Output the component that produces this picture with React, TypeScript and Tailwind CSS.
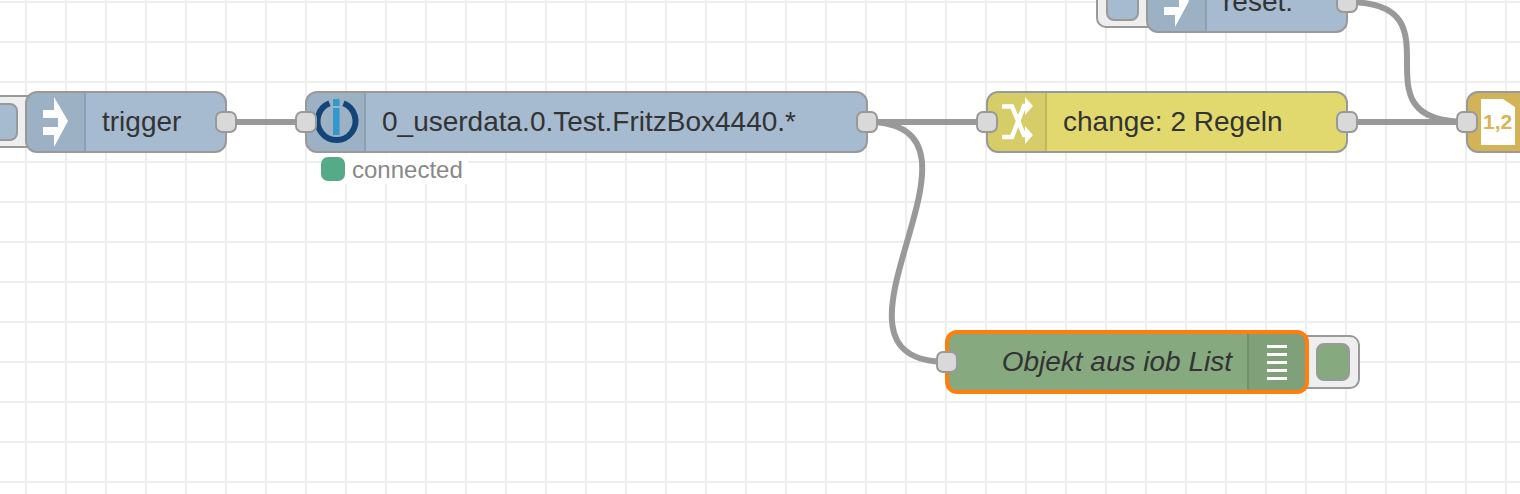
import type { ReactNode } from "react";

const FONT = "font-['Liberation_Sans',Arial,sans-serif]";

function Port({ side }: { side: "left" | "right" }) {
    return (
        <div
            className={`absolute top-[20px] h-[22px] w-[22px] rounded-[7px] border-2 border-[#999] bg-[#d9d9d9] ${
                side === "left" ? "left-[-10px]" : "right-[-10px]"
            }`}
        />
    );
}

function InjectIcon() {
    return (
        <svg width="57" height="58" viewBox="0 0 57 58" className="shrink-0">
            <path d="M27 4 L41 28 L27 54 L27 42 L16 42 L16 34 L31 34 L31 25 L16 25 L16 17 L27 17 Z" fill="#fff" />
        </svg>
    );
}

function IobIcon() {
    return (
        <svg width="57" height="58" viewBox="0 0 57 58" className="shrink-0">
            <path d="M22.5 10.3 A19 19 0 1 0 36.5 10.3" fill="none" stroke="#144578" strokeWidth="6" />
            <rect x="26" y="6" width="6.6" height="7" fill="#3399cc" />
            <rect x="26" y="15" width="6.6" height="27" fill="#3399cc" />
        </svg>
    );
}

function ChangeIcon() {
    return (
        <svg width="57" height="58" viewBox="0 0 57 58" className="shrink-0">
            <g fill="none" stroke="#fff" strokeWidth="4.5">
                <path d="M14 13.5 H24 L36 42 H39" />
                <path d="M14 44 H24 L36 13 H39" />
            </g>
            <path d="M37 4 L45 13 L37 22 Z" fill="#fff" />
            <path d="M37 33 L45 42 L37 51 Z" fill="#fff" />
        </svg>
    );
}

function TemplateIcon() {
    return (
        <div className="relative h-[58px] w-[57px] shrink-0">
            <svg width="57" height="58" viewBox="0 0 57 58" className="absolute left-0 top-0">
                <path d="M13 6 H35 L47 14 V52 H13 Z" fill="#fff" />
            </svg>
            <span className="absolute left-[15px] top-[17px] text-[21px] font-bold leading-[24px] text-[#d6b557]">1,2</span>
        </div>
    );
}

function ListIcon() {
    return (
        <div className="flex h-full w-full flex-col items-center justify-center gap-[5px]">
            {[0, 1, 2, 3, 4].map((i) => (
                <div key={i} className="h-[3px] w-[20px] bg-white" />
            ))}
        </div>
    );
}

function FlowNode({
    className,
    color,
    label,
    icon,
    hasIn,
    hasOut,
    children,
}: {
    className: string;
    color: string;
    label: string;
    icon: ReactNode;
    hasIn?: boolean;
    hasOut?: boolean;
    children?: ReactNode;
}) {
    return (
        <div className={`absolute h-[62px] ${className}`}>
            {children}
            <div className={`relative box-border flex h-full overflow-hidden rounded-[12px] border-2 border-[#999] ${color}`}>
                <div className="box-content flex h-full w-[57px] shrink-0 border-r-2 border-black/10 bg-black/5">{icon}</div>
                <span className="whitespace-nowrap pl-[16px] text-[28px] leading-[58px] text-[#333]">{label}</span>
            </div>
            {hasIn && <Port side="left" />}
            {hasOut && <Port side="right" />}
        </div>
    );
}

// the grey tab with the square button that sticks out of inject nodes
function InjectButton() {
    return (
        <div className="absolute right-full top-[4px] mr-[-20px] flex h-[53px] w-[70px] rounded-[10px] border-2 border-[#999] bg-[#eee] pl-[8px] pt-[6px]">
            <div className="h-[38px] w-[33px] rounded-[8px] border-2 border-[#999] bg-[#a6bbcf]" />
        </div>
    );
}

export default function App() {
    return (
        <div
            className={`relative h-[494px] w-[1520px] overflow-hidden bg-white bg-[linear-gradient(to_right,#eeeeee_2px,transparent_2px),linear-gradient(to_bottom,#eeeeee_2px,transparent_2px)] bg-[size:40px_40px] bg-[position:25px_1px] ${FONT}`}
        >
            {/* links */}
            <svg width="1520" height="494" className="absolute left-0 top-0" fill="none" stroke="#999" strokeWidth="6">
                <path d="M226 122 H306" />
                <path d="M867 122 H987" />
                <path d="M1347 122 H1467" />
                <path d="M1347 2 C1467 2 1347 122 1467 122" />
                <path d="M867 122 C1017 122 797 362 947 362" />
            </svg>

            <FlowNode className="left-[25px] top-[91px] w-[202px]" color="bg-[#a6bbcf]" label="trigger" icon={<InjectIcon />} hasOut>
                <InjectButton />
            </FlowNode>

            <FlowNode
                className="left-[305px] top-[91px] w-[563px]"
                color="bg-[#a6bbcf]"
                label="0_userdata.0.Test.FritzBox4440.*"
                icon={<IobIcon />}
                hasIn
                hasOut
            />
            <div className="absolute left-[321px] top-[154px] flex h-[30px] items-center">
                <div className="h-[24px] w-[24px] rounded-[7px] bg-[#55aa88]" />
                <span className="h-[30px] bg-white pl-[7px] pr-[5px] text-[24px] leading-[32px] text-[#888]">connected</span>
            </div>

            <FlowNode className="left-[986px] top-[91px] w-[362px]" color="bg-[#e2d96e]" label="change: 2 Regeln" icon={<ChangeIcon />} hasIn hasOut />

            <FlowNode className="left-[1146px] top-[-29px] w-[202px]" color="bg-[#a6bbcf]" label="reset:" icon={<InjectIcon />} hasOut>
                <InjectButton />
            </FlowNode>

            <FlowNode className="left-[1466px] top-[91px] w-[120px]" color="bg-[#debd5c]" label="" icon={<TemplateIcon />} hasIn />

            {/* debug node, selected */}
            <div className="absolute left-[945px] top-[330px] h-[64px] w-[364px]">
                <div className="absolute left-[345px] top-[5px] flex h-[54px] w-[70px] items-center justify-end rounded-[10px] border-2 border-[#999] bg-[#eee] pr-[8px]">
                    <div className="h-[38px] w-[34px] rounded-[8px] border-2 border-[#999] bg-[#87a980]" />
                </div>
                <div className="relative box-border flex h-full overflow-hidden rounded-[12px] border-4 border-[#ff7f0e] bg-[#87a980]">
                    <span className="flex-1 whitespace-nowrap pr-[15px] text-right text-[28px] italic leading-[56px] text-[#333]">
                        Objekt aus iob List
                    </span>
                    <div className="h-full w-[58px] shrink-0 border-l-2 border-black/10 bg-black/5">
                        <ListIcon />
                    </div>
                </div>
                <div className="absolute left-[-9px] top-[21px] h-[22px] w-[22px] rounded-[7px] border-2 border-[#999] bg-[#d9d9d9]" />
            </div>
        </div>
    );
}
